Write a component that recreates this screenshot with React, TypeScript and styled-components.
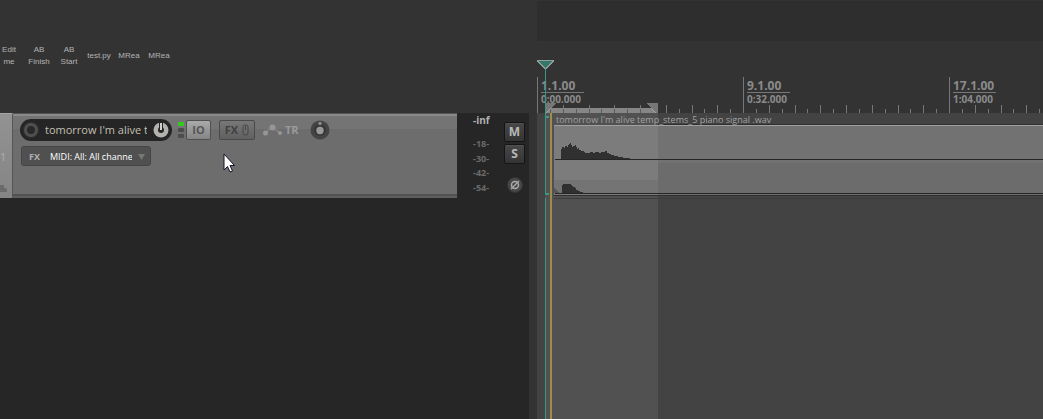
import React from "react";
import styled, { createGlobalStyle } from "styled-components";

const Global = createGlobalStyle`
  *, *::before, *::after { box-sizing: border-box; }
  body { margin: 0; background: #333333; font-family: "Open Sans", "Noto Sans", sans-serif; }
  button, select, input { font: inherit; color: inherit; margin: 0; padding: 0; border: 0; background: none; }
  h1, p { margin: 0; }
`;

const Window = styled.main`
  position: relative;
  display: grid;
  grid-template-columns: 529px minmax(0, 1fr);
  column-gap: 8px;
  min-height: 100vh;
  overflow: hidden;
`;

const Column = styled.section`
  display: flex;
  flex-direction: column;
  min-width: 0;
`;

const Toolbar = styled.nav`
  display: flex;
  align-items: center;
  height: 113px;
  padding-bottom: 2px;
`;

const ToolButton = styled.button<{ $first?: boolean }>`
  flex: none;
  width: 30px;
  margin-left: ${(p) => (p.$first ? "-6px" : "0")};
  font-family: "Liberation Sans", Arial, sans-serif;
  font-size: 8px;
  line-height: 12px;
  color: #b4b4b4;
  text-align: center;
  white-space: pre-line;
`;

const TrackList = styled.div`
  flex: 1;
  background: #262626;
`;

const Track = styled.article`
  display: flex;
  height: 85px;
  padding-right: 4px;
`;

const TrackIndex = styled.div`
  display: flex;
  position: relative;
  align-items: center;
  width: 13px;
  border-top: 1px solid #a4a4a4;
  border-right: 1px solid #555555;
  background: linear-gradient(#929292, #858585);
  color: #a9afb5;
  font-size: 11px;
`;

const FolderMark = styled.svg`
  position: absolute;
  left: 0;
  bottom: 5px;
`;

const TrackPanel = styled.div`
  flex: 1;
  display: flex;
  flex-direction: column;
  gap: 5px;
  padding: 5px 7px 0;
  border-top: 1px solid #555555;
  border-bottom: 2px solid #5f5f5f;
  background: linear-gradient(#8a8a8a 0 2px, #747474 2px 15px, #6d6d6d 15px 80px, #525252 80px);
`;

const ControlRow = styled.div`
  display: flex;
  align-items: center;
  height: 22px;
`;

const NameCapsule = styled.div`
  display: flex;
  align-items: center;
  gap: 5px;
  width: 152px;
  height: 22px;
  padding: 0 2px;
  border-radius: 11px;
  background: #252525;
`;

const TrackName = styled.input`
  flex: 1;
  min-width: 0;
  height: 16px;
  font-size: 11px;
  line-height: 16px;
  color: #c4c0b4;
  outline: none;
`;

const IconButton = styled.button`
  flex: none;
  display: flex;
`;

const Leds = styled.div`
  display: grid;
  gap: 2px;
  margin: 0 2px 0 6px;
`;

const Led = styled.i<{ $on?: boolean }>`
  width: 6px;
  height: 4px;
  border-radius: 1px;
  background: ${(p) => (p.$on ? "#35c924" : "#4c4c4c")};
`;

const PanelButton = styled.button<{ $lit?: boolean }>`
  display: flex;
  align-items: center;
  justify-content: center;
  gap: 4px;
  width: ${(p) => (p.$lit ? "25px" : "36px")};
  height: 20px;
  border: 1px solid ${(p) => (p.$lit ? "#505050" : "#494949")};
  border-radius: 2px;
  background: ${(p) => (p.$lit ? "linear-gradient(#aaaaaa, #858585)" : "linear-gradient(#777777, #606060)")};
  color: ${(p) => (p.$lit ? "#555555" : "#404040")};
  font-size: 11px;
  font-weight: 700;
  line-height: 16px;
`;

const FxGroup = styled.div`
  margin: 0 7px 0 8px;
`;

const EnvelopeButton = styled.button`
  display: flex;
  align-items: center;
  gap: 2px;
  color: #9a9a9a;
  font-size: 11px;
  font-weight: 700;
  line-height: 16px;
  margin-right: 11px;
`;

const InputBar = styled.div`
  display: flex;
  align-items: center;
  width: 130px;
  height: 20px;
  margin-left: 1px;
  border: 1px solid #454545;
  border-radius: 3px;
  background: #505050;
`;

const InputFx = styled.button`
  width: 25px;
  font-size: 9px;
  font-weight: 700;
  color: #b0b0b0;
`;

const InputSelect = styled.select`
  appearance: none;
  width: 82px;
  height: 18px;
  margin: 0 5px 0 3px;
  overflow: hidden;
  font-size: 9px;
  color: #ffffff;
  outline: none;
  text-overflow: clip;
`;

const Meter = styled.div`
  display: grid;
  grid-template-rows: 23px 15px 14px 15px 14px;
  width: 47px;
  padding-left: 16px;
  color: #6a6a6a;
  font-size: 9px;
  font-weight: 700;
  line-height: 15px;
`;

const Peak = styled.output`
  color: #b0b0b0;
  font-size: 10px;
`;

const MixButtons = styled.div`
  display: flex;
  flex-direction: column;
  align-items: center;
  gap: 2px;
  width: 21px;
  padding-top: 9px;
`;

const MixButton = styled.button`
  width: 21px;
  height: 20px;
  border: 1px solid #151515;
  border-radius: 2px;
  background: linear-gradient(#484848, #343434);
  box-shadow: inset 0 1px #505050;
  color: #b8b8b8;
  font-size: 12px;
  font-weight: 700;
  line-height: 16px;
`;

const PhaseButton = styled(IconButton)`
  margin-top: 11px;
`;

const Header = styled.div`
  height: 77px;
  background: linear-gradient(#2e2e2e 0 40px, #333333 40px);
  border-top: 1px solid #333333;
`;

const Ruler = styled.div`
  display: flex;
  position: relative;
  height: 36px;
  overflow: hidden;
`;

const Segment = styled.div`
  flex: 0 0 206px;
  padding: 0 0 0 3px;
  border-left: 1px solid #777777;
  color: #8b8b8b;
  font-weight: 700;
`;

const Bar = styled.p`
  width: 43px;
  height: 16px;
  border-bottom: 1px solid #777777;
  font-size: 12px;
  line-height: 17px;
`;

const Time = styled.p`
  font-size: 10px;
  line-height: 12px;
`;

const Ticks = styled.svg`
  position: absolute;
  inset: 0;
`;

const Arrange = styled.div`
  flex: 1;
  background: linear-gradient(90deg, #434343 0 8px, #515151 8px 121px, #434343 121px);
`;

const Item = styled.article`
  margin-left: 17px;
`;

const ItemName = styled.h1`
  height: 12px;
  padding-left: 2px;
  background: linear-gradient(90deg, transparent 104px, #303030 104px) bottom / 100% 1px no-repeat;
  color: #a2a2a2;
  font-size: 9px;
  font-weight: 400;
  line-height: 14px;
  white-space: nowrap;
`;

const Wave = styled.svg`
  display: block;
  width: 100%;
`;

const Overlay = styled.svg`
  position: absolute;
  left: 529px;
  top: 0;
  pointer-events: none;
`;

const Pointer = styled.svg`
  position: absolute;
  left: 223px;
  top: 153px;
  pointer-events: none;
`;

const tools = ["Edit\nme", "AB\nFinish", "AB\nStart", "test.py", "MRea", "MRea"];
const segments = [
  ["1.1.00", "0:00.000"],
  ["9.1.00", "0:32.000"],
  ["17.1.00", "1:04.000"],
];
const levels = ["-18-", "-30-", "-42-", "-54-"];
const ticks = Array.from({ length: 160 }, (_, i) => i + 1).filter((i) => i % 16 !== 0);

const upper =
  "M7 34V24H8V22H10V23H11V21H13V22H14V20H15V19H16V18H17V20H18V22H19V21H21V20H22V22H23V24H24V23H25V25H27V26H30V27H31V28H36V27H39V28H41V27H45V28H47V27H51V26H53V28H55V29H57V30H60V31H64V32H69V33H76V34Z";
const lower = "M8 68V60H9V59H17V60H18V61H19V62H21V63H22V65H24V66H26V67H29V68Z";

export default function App() {
  return (
    <Window>
      <Global />
      <Column>
        <Toolbar aria-label="Actions">
          {tools.map((t, i) => (
            <ToolButton key={i} $first={i === 0}>{t}</ToolButton>
          ))}
        </Toolbar>
        <TrackList>
          <Track>
            <TrackIndex>
              1
              <FolderMark width="8" height="8" aria-hidden="true">
                <path d="M0 0h4v3h2l1 2v2H0z" fill="#6b6b6b" />
              </FolderMark>
            </TrackIndex>
            <TrackPanel>
              <ControlRow>
                <NameCapsule>
                  <IconButton aria-label="Record arm">
                    <svg width="18" height="18">
                      <circle cx="9" cy="9" r="8" fill="#303030" />
                      <circle cx="9" cy="9" r="5.5" fill="#292929" stroke="#505050" strokeWidth="3" />
                    </svg>
                  </IconButton>
                  <TrackName aria-label="Track name" defaultValue="tomorrow I'm alive t" />
                  <IconButton aria-label="Volume">
                    <svg width="18" height="18">
                      <circle cx="9" cy="9" r="7.5" fill="#b4b2ae" />
                      <circle cx="9" cy="9" r="3" fill="#252525" />
                      <path d="M9 1v8" stroke="#252525" strokeWidth="4" />
                      <path d="M9 2v7" stroke="#d2d0cb" strokeWidth="2" />
                    </svg>
                  </IconButton>
                </NameCapsule>
                <Leds aria-hidden="true"><Led $on /><Led /><Led /></Leds>
                <PanelButton $lit>IO</PanelButton>
                <FxGroup>
                  <PanelButton>
                    FX
                    <svg width="7" height="12" aria-hidden="true">
                      <rect x="1" y="1" width="5" height="10" rx="2" fill="none" stroke="#484848" />
                      <path d="M3.5 2v4" stroke="#484848" />
                    </svg>
                  </PanelButton>
                </FxGroup>
                <EnvelopeButton>
                  <svg width="21" height="12" aria-hidden="true">
                    <path d="M3 9l7-6 8 6" fill="none" stroke="#929292" />
                    <g fill="#969696">
                      <circle cx="3.5" cy="9" r="2.5" />
                      <circle cx="10.5" cy="3.5" r="3" />
                      <circle cx="18" cy="9" r="2" />
                    </g>
                  </svg>
                  TR
                </EnvelopeButton>
                <IconButton aria-label="Pan">
                  <svg width="20" height="20">
                    <circle cx="10" cy="10" r="9.5" fill="#444444" />
                    <circle cx="10" cy="10" r="6" fill="#383838" />
                    <circle cx="10" cy="10.5" r="3.7" fill="#999999" />
                    <circle cx="10" cy="3.5" r="1.7" fill="#8c8c8c" />
                  </svg>
                </IconButton>
              </ControlRow>
              <InputBar>
                <InputFx>FX</InputFx>
                <InputSelect aria-label="Record input">
                  <option>MIDI: All: All channels</option>
                </InputSelect>
                <svg width="9" height="7" aria-hidden="true">
                  <path d="M1 1h7l-3.500 6z" fill="#777777" />
                </svg>
              </InputBar>
            </TrackPanel>
            <Meter>
              <Peak>-inf</Peak>
              {levels.map((l) => <span key={l}>{l}</span>)}
            </Meter>
            <MixButtons>
              <MixButton aria-label="Mute">M</MixButton>
              <MixButton aria-label="Solo">S</MixButton>
              <PhaseButton aria-label="Invert phase">
                <svg width="16" height="16">
                  <circle cx="8" cy="8" r="7.500" fill="#484848" stroke="#353535" />
                  <circle cx="8" cy="8" r="3.500" fill="none" stroke="#aaaaaa" strokeWidth="1.5" />
                  <path d="M4 12l8-8" stroke="#aaaaaa" strokeWidth="1.200" />
                </svg>
              </PhaseButton>
            </MixButtons>
          </Track>
        </TrackList>
      </Column>
      <Column>
        <Header />
        <Ruler>
          <Ticks width="3000" height="36" shapeRendering="crispEdges" aria-hidden="true">
            {ticks.map((i) => {
              const x = Math.round(i * 12.875);
              return <rect key={i} x={x} y={i % 2 ? 32 : 28} width="1" height={i % 2 ? 4 : 8} fill="#777777" />;
            })}
            <rect x="9" y="31" width="112" height="5" fill="#868686" />
            <path d="M9 26h10l-9 10h-1zM121 26h-11l9 10h2z" fill="#777777" />
            <path d="M9 36l5-5M119 36l-5-5" stroke="#a0a0a0" fill="none" />
            {[13, 26, 39, 52, 64, 77, 90, 103].map((x) => (
              <rect key={x} x={x} y="32" width="1" height="4" fill="#5c5c5c" />
            ))}
          </Ticks>
          {segments.map(([bar, time]) => (
            <Segment key={bar}>
              <Bar>{bar}</Bar>
              <Time>{time}</Time>
            </Segment>
          ))}
        </Ruler>
        <Arrange>
          <Item>
            <ItemName>tomorrow I'm alive temp_stems_5 piano signal .wav</ItemName>
            <Wave height="74" shapeRendering="crispEdges" aria-hidden="true">
              <rect width="100%" height="71" fill="#727272" />
              <rect y="38" width="100%" height="33" fill="#6c6c6c" />
              <rect width="104" height="71" fill="#7c7c7c" />
              <rect y="55" width="104" height="14" fill="#747474" />
              <rect width="100%" height="1" fill="#a0a0a0" />
              <path d={upper} fill="#303030" />
              <rect x="1" y="34" width="100%" height="1" fill="#262626" />
              <path d="M0 63l6 5H0z" fill="#565656" />
              <path d={lower} fill="#303030" />
              <rect x="1" y="68" width="100%" height="1" fill="#262626" />
              <rect y="70" width="100%" height="1" fill="#303030" />
              <rect y="73" width="100%" height="1" fill="#3c3c3c" />
            </Wave>
          </Item>
        </Arrange>
      </Column>
      <Overlay width="40" height="2000" shapeRendering="crispEdges" aria-hidden="true">
        <path d="M8 60h17l-8.500 9z" fill="#33796a" />
        <path d="M8 60.500h17M8.500 61l8 8 8-8" fill="none" stroke="#909d99" />
        <rect x="16" y="69" width="1" height="126" fill="#379985" />
        <rect x="16" y="198" width="1" height="1802" fill="#379985" />
        <path d="M16 116h4v2h-4zM16 193h4v2h-4z" fill="#379985" />
        <rect x="21" y="113" width="2" height="1887" fill="#a28b4b" />
      </Overlay>
      <Pointer width="12" height="20" aria-hidden="true">
        <path d="M1 1v16l3.500-3.500 2.500 5.500 2.500-1-2.500-5.500h4.500z" fill="#ffffff" stroke="#141428" />
      </Pointer>
    </Window>
  );
}
